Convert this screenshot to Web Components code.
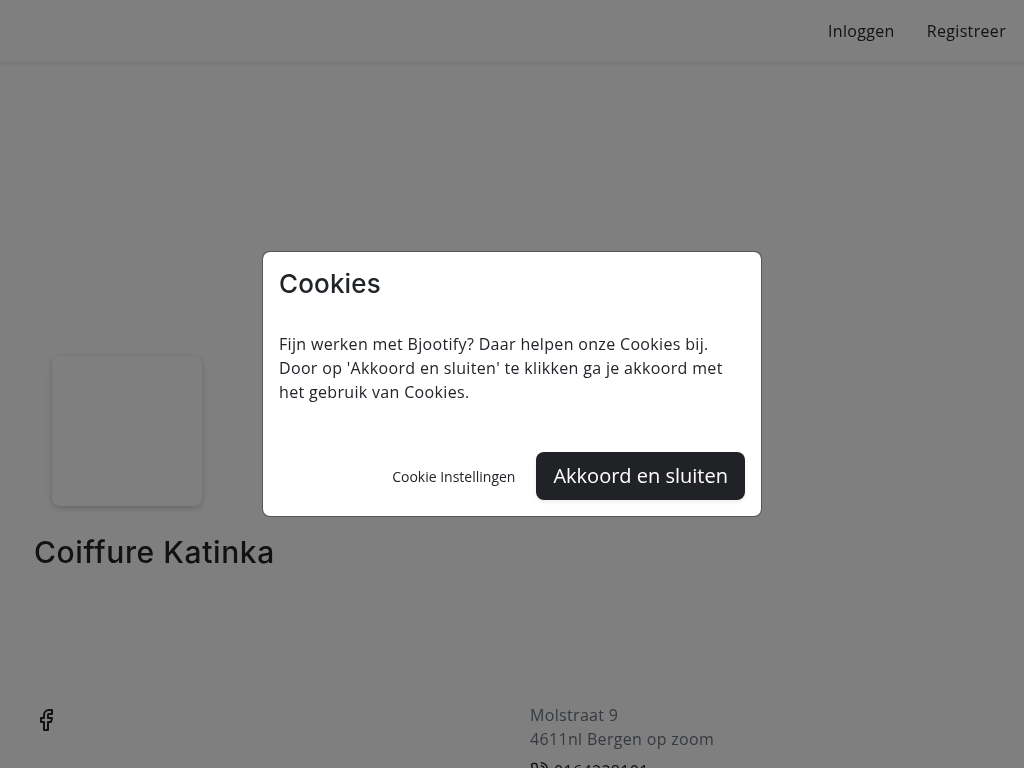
<!DOCTYPE html>
<html lang="nl">
<head>
<meta charset="utf-8">
<title>Coiffure Katinka</title>
<style>
  html, body { margin: 0; padding: 0; background: #fff; overflow: hidden; height: 100%; }
  body { font-family: "Open Sans", "Liberation Sans", sans-serif; font-size: 16px; color: #212529; }
</style>
</head>
<body>
<site-nav>
  <a href="#">Inloggen</a>
  <a href="#">Registreer</a>
</site-nav>
<salon-hero name="Coiffure Katinka"></salon-hero>
<site-footer></site-footer>
<cookie-modal title-text="Cookies">
  Fijn werken met Bjootify? Daar helpen onze Cookies bij. Door op 'Akkoord en sluiten' te klikken ga je akkoord met het gebruik van Cookies.
</cookie-modal>

<script>
customElements.define(
  "site-nav",
  class extends HTMLElement {
    constructor() {
      super();
      this.attachShadow({ mode: "open" });
      this.shadowRoot.innerHTML = `
        <style>
          :host {
            display: flex;
            justify-content: flex-end;
            align-items: center;
            gap: 32px;
            height: 62px;
            padding-right: 18px;
            box-shadow: 0 2px 4px rgba(0, 0, 0, 0.08);
            will-change: transform;
          }
          ::slotted(a) {
            color: #212529;
            text-decoration: none;
            letter-spacing: 0.33px;
          }
        </style>
        <slot></slot>
      `;
    }
  }
);

customElements.define(
  "salon-hero",
  class extends HTMLElement {
    constructor() {
      super();
      this.attachShadow({ mode: "open" });
      this.shadowRoot.innerHTML = `
        <style>
          :host {
            display: block;
            padding: 294px 0 0 34px;
            will-change: transform;
          }
          .logo {
            width: 150px;
            height: 150px;
            margin-left: 18px;
            border-radius: 8px;
            background: #fff;
            box-shadow: 0 2px 6px rgba(0, 0, 0, 0.2);
          }
          h1 {
            margin: 26px 0 0;
            font: 500 30px/40px Inter, "Open Sans", sans-serif;
            letter-spacing: 0.6px;
            color: #212529;
          }
        </style>
        <div class="logo"></div>
        <h1></h1>
      `;
      this.shadowRoot.querySelector("h1").textContent = this.getAttribute("name");
    }
  }
);

customElements.define(
  "site-footer",
  class extends HTMLElement {
    constructor() {
      super();
      this.attachShadow({ mode: "open" });
      this.shadowRoot.innerHTML = `
        <style>
          :host {
            display: grid;
            grid-template-columns: 530px 1fr;
            padding-top: 131px;
            line-height: 24px;
            letter-spacing: 0.33px;
            will-change: transform;
          }
          .social { padding: 5px 0 0 34px; }
          .social svg { display: block; }
          .address { color: #6c757d; }
          .phone { display: flex; align-items: center; gap: 6px; color: #212529; margin-top: 8px; }
        </style>
        <div class="social">
          <svg width="24" height="24" viewBox="0 0 24 24" fill="none" stroke="#212529" stroke-width="2" stroke-linecap="round" stroke-linejoin="round">
            <path d="M18 2h-3a5 5 0 0 0-5 5v3H7v4h3v8h4v-8h3l1-4h-4V7a1 1 0 0 1 1-1h3z"/>
          </svg>
        </div>
        <div class="address">
          <div>Molstraat 9</div>
          <div>4611nl Bergen op zoom</div>
          <div class="phone">
            <svg width="18" height="18" viewBox="0 0 24 24" fill="none" stroke="#212529" stroke-width="2" stroke-linecap="round" stroke-linejoin="round">
              <path d="M15.05 5A5 5 0 0 1 19 8.95M15.05 1A9 9 0 0 1 23 8.94m-1 7.98v3a2 2 0 0 1-2.18 2 19.79 19.79 0 0 1-8.63-3.07 19.5 19.5 0 0 1-6-6 19.79 19.79 0 0 1-3.07-8.67A2 2 0 0 1 4.11 2h3a2 2 0 0 1 2 1.72 12.84 12.84 0 0 0 .63 2.81 2 2 0 0 1-.45 2.11L8.09 9.91a16 16 0 0 0 6 6l1.27-1.27a2 2 0 0 1 2.11-.45 12.84 12.84 0 0 0 2.81.63A2 2 0 0 1 22 16.92z"/>
            </svg>
            <span>0164228101</span>
          </div>
        </div>
      `;
    }
  }
);

customElements.define(
  "cookie-modal",
  class extends HTMLElement {
    constructor() {
      super();
      this.attachShadow({ mode: "open" });
      this.shadowRoot.innerHTML = `
        <style>
          :host {
            position: fixed;
            inset: 0;
            display: flex;
            align-items: center;
            justify-content: center;
            background: rgba(0, 0, 0, 0.5);
            will-change: transform;
          }
          .dialog {
            box-sizing: border-box;
            width: 500px;
            height: 266px;
            display: flex;
            flex-direction: column;
            padding: 16px;
            background: #fff;
            background-clip: padding-box;
            border: 1px solid rgba(0, 0, 0, 0.32);
            border-radius: 8px;
          }
          h2 {
            margin: -1px 0 0;
            font: 500 26px/34px Inter, "Open Sans", sans-serif;
            letter-spacing: 0.15px;
            color: #212529;
          }
          p {
            margin: 31px 0 0;
            line-height: 24px;
            letter-spacing: 0.33px;
            color: #212529;
          }
          .actions {
            margin-top: auto;
            display: flex;
            align-items: center;
            justify-content: flex-end;
            gap: 21px;
          }
          .settings {
            font: 14px "Open Sans", sans-serif;
            color: #212529;
          }
          button {
            font: 20px/28px "Open Sans", sans-serif;
            color: #fff;
            background: #212226;
            border: 0;
            border-radius: 8px;
            padding: 10px 17px;
            box-shadow: 0 2px 4px rgba(0, 0, 0, 0.08);
          }
        </style>
        <div class="dialog">
          <h2></h2>
          <p><slot></slot></p>
          <div class="actions">
            <span class="settings">Cookie Instellingen</span>
            <button id="accept">Akkoord en sluiten</button>
          </div>
        </div>
      `;
      this.shadowRoot.querySelector("h2").textContent = this.getAttribute("title-text");
    }
  }
);
</script>
</body>
</html>
